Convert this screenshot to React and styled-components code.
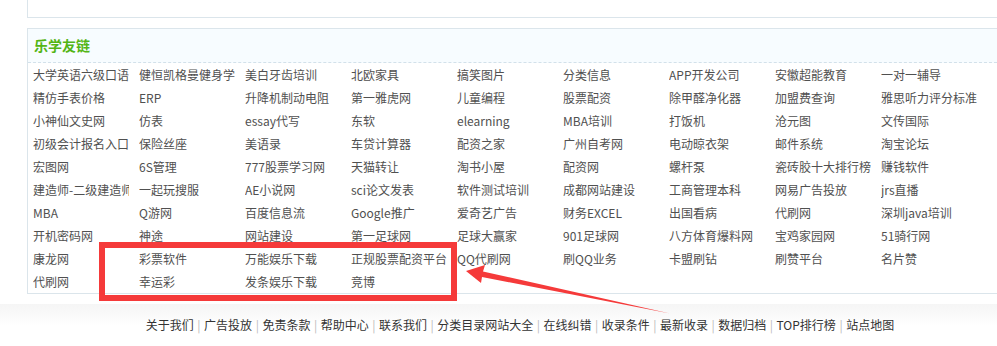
import React from 'react';
import styled, { createGlobalStyle } from 'styled-components';

const links = [
  ['大学英语六级口语', '健恒凯格曼健身学', '美白牙齿培训', '北欧家具', '搞笑图片', '分类信息', 'APP开发公司', '安徽超能教育', '一对一辅导'],
  ['精仿手表价格', 'ERP', '升降机制动电阻', '第一雅虎网', '儿童编程', '股票配资', '除甲醛净化器', '加盟费查询', '雅思听力评分标准'],
  ['小神仙文史网', '仿表', 'essay代写', '东软', 'elearning', 'MBA培训', '打饭机', '沧元图', '文传国际'],
  ['初级会计报名入口', '保险丝座', '美语录', '车贷计算器', '配资之家', '广州自考网', '电动晾衣架', '邮件系统', '淘宝论坛'],
  ['宏图网', '6S管理', '777股票学习网', '天猫转让', '淘书小屋', '配资网', '螺杆泵', '瓷砖胶十大排行榜', '赚钱软件'],
  ['建造师-二级建造师', '一起玩搜服', 'AE小说网', 'sci论文发表', '软件测试培训', '成都网站建设', '工商管理本科', '网易广告投放', 'jrs直播'],
  ['MBA', 'Q游网', '百度信息流', 'Google推广', '爱奇艺广告', '财务EXCEL', '出国看病', '代刷网', '深圳java培训'],
  ['开机密码网', '神途', '网站建设', '第一足球网', '足球大赢家', '901足球网', '八方体育爆料网', '宝鸡家园网', '51骑行网'],
  ['康龙网', '彩票软件', '万能娱乐下载', '正规股票配资平台', 'QQ代刷网', '刷QQ业务', '卡盟刷钻', '刷赞平台', '名片赞'],
  ['代刷网', '幸运彩', '发条娱乐下载', '竞博'],
].flat();

const footerLinks = ['关于我们', '广告投放', '免责条款', '帮助中心', '联系我们', '分类目录网站大全', '在线纠错', '收录条件', '最新收录', '数据归档', 'TOP排行榜', '站点地图'];

const Global = createGlobalStyle`
  html, body { margin: 0; padding: 0; background: #fff; overflow: hidden; }
  body { font-family: "Noto Sans CJK SC", "Noto Sans", sans-serif; }
`;

const Page = styled.div`
  position: relative;
  width: 1040px;
  height: 346px;
`;

const PrevBox = styled.div`
  margin: 0 27px;
  height: 17px;
  border: 1px solid #dbe5eb;
  border-top: none;
`;

const Box = styled.div`
  margin: 10px 27px 0;
  border: 1px solid #dbe5eb;
`;

const BoxHead = styled.div`
  height: 33px;
  line-height: 33px;
  padding-left: 6px;
  background: #f7fcff;
  border-bottom: 1px dashed #d3e1ea;
  font-size: 14px;
  font-weight: bold;
  color: #53b515;
`;

const LinkList = styled.ul`
  list-style: none;
  margin: 0;
  padding: 0 0 0 5px;
  display: grid;
  grid-template-columns: repeat(9, 106px);
  grid-auto-rows: 23px;
`;

const LinkItem = styled.li`
  width: 96px;
  overflow: hidden;
  white-space: nowrap;
  line-height: 23px;
  font-size: 12px;
  color: #505050;
`;

const Footer = styled.div`
  margin-top: 10px;
  padding-top: 11px;
  background: linear-gradient(#f5f5f5, #fff 22px);
  text-align: center;
  font-size: 12px;
`;

const FooterLinks = styled.div`
  line-height: 20px;
  color: #333;
`;

const Sep = styled.span`
  color: #bbb;
  margin: 0 3.5px;
`;

const Stats = styled.div`
  margin-top: 5px;
  line-height: 22px;
  color: #4cb51d;
`;

const Highlight = styled.div`
  position: absolute;
  left: 99px;
  top: 242px;
  width: 346px;
  height: 47px;
  border: 6px solid #f53a3a;
`;

const ArrowLayer = styled.svg`
  position: absolute;
  left: 0;
  top: 0;
  pointer-events: none;
`;

export default function App() {
  return (
    <Page>
      <Global />
      <PrevBox />
      <Box>
        <BoxHead>乐学友链</BoxHead>
        <LinkList>
          {links.map((l, i) => (
            <LinkItem key={i}>{l}</LinkItem>
          ))}
        </LinkList>
      </Box>
      <Footer>
        <FooterLinks>
          {footerLinks.map((f, i) => (
            <React.Fragment key={f}>
              {i > 0 && <Sep>|</Sep>}
              {f}
            </React.Fragment>
          ))}
        </FooterLinks>
        <Stats>Processed in 0.769049 second(s), 40 Queries, Gzip Enabled</Stats>
      </Footer>
      <Highlight />
      <ArrowLayer width="1040" height="346">
        <polygon
          points="466,271 485,265 483,271.5 670,313.5 482,277 481,283"
          fill="#f53a3a"
        />
      </ArrowLayer>
    </Page>
  );
}
